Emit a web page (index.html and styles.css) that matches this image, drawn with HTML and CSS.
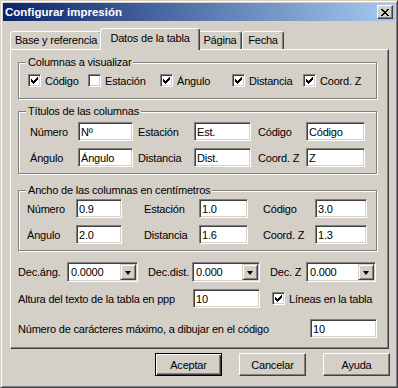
FILE: index.html
```html
<!DOCTYPE html>
<html lang="es">
  <head>
    <meta charset="UTF-8" />
    <title>Configurar impresión</title>
    <link rel="stylesheet" href="styles.css">
  </head>
  <body>
    <div class="window">
      <div class="titlebar">
        <span class="title">Configurar impresión</span>
        <span class="close-btn">
          <svg width="8" height="7" viewBox="0 0 8 7" shape-rendering="crispEdges">
            <g fill="#000">
              <rect x="0" y="0" width="2" height="1"/><rect x="6" y="0" width="2" height="1"/>
              <rect x="1" y="1" width="2" height="1"/><rect x="5" y="1" width="2" height="1"/>
              <rect x="2" y="2" width="4" height="1"/>
              <rect x="3" y="3" width="2" height="1"/>
              <rect x="2" y="4" width="4" height="1"/>
              <rect x="1" y="5" width="2" height="1"/><rect x="5" y="5" width="2" height="1"/>
              <rect x="0" y="6" width="2" height="1"/><rect x="6" y="6" width="2" height="1"/>
            </g>
          </svg>
        </span>
      </div>

      <div class="tabs">
        <div class="tab tab-base">Base y referencia</div>
        <div class="tab tab-datos active">Datos de la tabla</div>
        <div class="tab tab-pagina">Página</div>
        <div class="tab tab-fecha">Fecha</div>
      </div>

      <div class="panel">
        <!-- columnas a visualizar -->
        <div class="group g-cols">
          <span class="legend">Columnas a visualizar</span>
          <div class="checks">
            <label class="chk-item w60"><span class="cb"><svg class="tick" width="7" height="7" viewBox="0 0 7 7" shape-rendering="crispEdges"><path d="M6 0h1v1H6zM5 1h2v1H5zM0 2h1v1H0zM4 2h3v1H4zM0 3h2v1H0zM3 3h3v1H3zM0 4h5v1H0zM1 5h3v1H1zM2 6h1v1H2z"/></svg></span>Código</label>
            <label class="chk-item w72"><span class="cb"></span>Estación</label>
            <label class="chk-item w72"><span class="cb"><svg class="tick" width="7" height="7" viewBox="0 0 7 7" shape-rendering="crispEdges"><path d="M6 0h1v1H6zM5 1h2v1H5zM0 2h1v1H0zM4 2h3v1H4zM0 3h2v1H0zM3 3h3v1H3zM0 4h5v1H0zM1 5h3v1H1zM2 6h1v1H2z"/></svg></span>Ángulo</label>
            <label class="chk-item w71"><span class="cb"><svg class="tick" width="7" height="7" viewBox="0 0 7 7" shape-rendering="crispEdges"><path d="M6 0h1v1H6zM5 1h2v1H5zM0 2h1v1H0zM4 2h3v1H4zM0 3h2v1H0zM3 3h3v1H3zM0 4h5v1H0zM1 5h3v1H1zM2 6h1v1H2z"/></svg></span>Distancia</label>
            <label class="chk-item"><span class="cb"><svg class="tick" width="7" height="7" viewBox="0 0 7 7" shape-rendering="crispEdges"><path d="M6 0h1v1H6zM5 1h2v1H5zM0 2h1v1H0zM4 2h3v1H4zM0 3h2v1H0zM3 3h3v1H3zM0 4h5v1H0zM1 5h3v1H1zM2 6h1v1H2z"/></svg></span>Coord. Z</label>
          </div>
        </div>

        <!-- titulos -->
        <div class="group g-titles">
          <span class="legend">Títulos de las columnas</span>
          <div class="grid">
            <span class="lbl">Número</span>
            <input class="field" type="text" value="Nº" />
            <span class="lbl l2">Estación</span>
            <input class="field" type="text" value="Est." />
            <span class="lbl l3">Código</span>
            <input class="field" type="text" value="Código" />

            <span class="lbl">Ángulo</span>
            <input class="field" type="text" value="Ángulo" />
            <span class="lbl l2">Distancia</span>
            <input class="field" type="text" value="Dist." />
            <span class="lbl l3">Coord. Z</span>
            <input class="field" type="text" value="Z" />
          </div>
        </div>

        <!-- anchos -->
        <div class="group g-widths">
          <span class="legend">Ancho de las columnas en centímetros</span>
          <div class="grid">
            <span class="lbl">Número</span>
            <input class="field" type="text" value="0.9" />
            <span class="lbl l2">Estación</span>
            <input class="field" type="text" value="1.0" />
            <span class="lbl l3">Código</span>
            <input class="field" type="text" value="3.0" />

            <span class="lbl">Ángulo</span>
            <input class="field" type="text" value="2.0" />
            <span class="lbl l2">Distancia</span>
            <input class="field" type="text" value="1.6" />
            <span class="lbl l3">Coord. Z</span>
            <input class="field" type="text" value="1.3" />
          </div>
        </div>

        <div class="row dec-row">
          <span class="lbl dec-l1">Dec.áng.</span>
          <div class="combo combo-ang"><span class="combo-val">0.0000</span><span class="combo-btn"><i class="arrow"></i></span></div>
          <span class="lbl dec-l2">Dec.dist.</span>
          <div class="combo combo-dist"><span class="combo-val">0.000</span><span class="combo-btn"><i class="arrow"></i></span></div>
          <span class="lbl dec-l3">Dec. Z</span>
          <div class="combo combo-z"><span class="combo-val">0.000</span><span class="combo-btn"><i class="arrow"></i></span></div>
        </div>

        <div class="row altura-row">
          <span class="lbl altura-lbl">Altura del texto de la tabla en ppp</span>
          <input class="field small-field" type="text" value="10" />
          <label class="chk-item lineas"><span class="cb"><svg class="tick" width="7" height="7" viewBox="0 0 7 7" shape-rendering="crispEdges"><path d="M6 0h1v1H6zM5 1h2v1H5zM0 2h1v1H0zM4 2h3v1H4zM0 3h2v1H0zM3 3h3v1H3zM0 4h5v1H0zM1 5h3v1H1zM2 6h1v1H2z"/></svg></span>Líneas en la tabla</label>
        </div>

        <div class="row num-row">
          <span class="lbl num-lbl">Número de carácteres máximo, a dibujar en el código</span>
          <input class="field small-field" type="text" value="10" />
        </div>
      </div>

      <div class="buttons">
        <button class="btn btn-default">Aceptar</button>
        <button class="btn">Cancelar</button>
        <button class="btn">Ayuda</button>
      </div>
    </div>
  </body>
</html>
```

FILE: styles.css
```css
/* ventana estilo Windows clásico */
body {
  margin: 0;
  font-family: "Liberation Sans", Arial, sans-serif;
  font-size: 11px;
  letter-spacing: -0.2px;
  color: #000000;
  background-color: #d4d0c8;
}

.window {
  width: 398px;
  height: 388px;
  box-sizing: border-box;
  background-color: #d4d0c8;
  border: 1px solid;
  border-color: #d4d0c8 #404040 #404040 #d4d0c8;
  box-shadow: inset 1px 1px #ffffff, inset -1px -1px #808080;
  padding: 2px;
  display: flex;
  flex-direction: column;
}

.titlebar {
  height: 18px;
  flex-shrink: 0;
  background: linear-gradient(to right, #0a246a, #a6caf0);
  display: flex;
  align-items: center;
  justify-content: space-between;
  padding: 0 2px;
}

.title {
  color: #ffffff;
  font-weight: bold;
  font-size: 11.5px;
  letter-spacing: 0;
}

.close-btn {
  width: 16px;
  height: 14px;
  box-sizing: border-box;
  background-color: #d4d0c8;
  border: 1px solid;
  border-color: #ffffff #404040 #404040 #ffffff;
  box-shadow: inset -1px -1px #808080;
  display: flex;
  align-items: center;
  justify-content: center;
}

.close-btn svg {
  display: block;
  margin-left: -1px;
}

/* pestañas */
.tabs {
  display: flex;
  align-items: flex-end;
  height: 21px;
  margin: 7px 0 0 7px;
  position: relative;
  z-index: 1;
  flex-shrink: 0;
}

.tab {
  height: 18px;
  box-sizing: border-box;
  border: 1px solid;
  border-bottom: none;
  border-color: #ffffff #404040 transparent #ffffff;
  box-shadow: inset -1px 0 #808080;
  border-radius: 3px 3px 0 0;
  background-color: #d4d0c8;
  text-align: center;
  line-height: 16px;
}

.tab.active {
  height: 22px;
  margin: 0 -2px -1px -2px;
  line-height: 18px;
  position: relative;
}

.tab-base { width: 92px; }
.tab-datos { width: 100px; }
.tab-pagina { width: 44px; }
.tab-fecha { width: 42px; }

.panel {
  width: 379px;
  height: 300px;
  box-sizing: border-box;
  margin-left: 7px;
  border: 1px solid;
  border-color: #ffffff #404040 #404040 #ffffff;
  box-shadow: inset -1px -1px #808080;
  padding: 12px 11px 0 7px;
  flex-shrink: 0;
}

/* marcos de grupo */
.group {
  position: relative;
  border: 1px solid #808080;
  box-shadow: inset 1px 1px #ffffff, 1px 1px #ffffff;
}

.legend {
  position: absolute;
  top: -7px;
  left: 7px;
  padding: 0 2px;
  line-height: 13px;
  background-color: #d4d0c8;
  white-space: nowrap;
}

.g-cols {
  height: 37px;
  box-sizing: border-box;
  padding: 11px 0 0 9px;
}

.g-titles {
  height: 63px;
  box-sizing: border-box;
  margin-top: 12px;
  padding: 10px 0 0 11px;
}

.g-widths {
  height: 61px;
  box-sizing: border-box;
  margin-top: 16px;
  padding: 8px 0 0 8px;
}

.checks {
  display: flex;
  align-items: center;
  height: 13px;
}

.chk-item {
  display: flex;
  align-items: center;
  gap: 4px;
  white-space: nowrap;
}

.w60 { width: 60px; }
.w72 { width: 72px; }
.w71 { width: 71px; }

.cb {
  width: 13px;
  height: 13px;
  box-sizing: border-box;
  flex-shrink: 0;
  padding: 2px;
  background-color: #ffffff;
  border: 1px solid;
  border-color: #808080 #ffffff #ffffff #808080;
  box-shadow: inset 1px 1px #404040, inset -1px -1px #d4d0c8;
}

.tick {
  display: block;
  fill: #000000;
}

.grid {
  display: grid;
  row-gap: 7px;
  align-items: center;
}

.g-titles .grid {
  grid-template-columns: 48px 55px 61px 57px 55px 59px;
}

.g-titles .l2 { padding-left: 5px; }
.g-titles .l3 { padding-left: 7px; }

.g-widths .grid {
  grid-template-columns: 49px 46px 77px 49px 67px 52px;
}

.g-widths .l2 { padding-left: 22px; }
.g-widths .l3 { padding-left: 15px; }

.lbl {
  white-space: nowrap;
}

.field {
  width: 100%;
  height: 19px;
  box-sizing: border-box;
  margin: 0;
  padding: 0 2px;
  border: 1px solid;
  border-color: #808080 #ffffff #ffffff #808080;
  box-shadow: inset 1px 1px #404040, inset -1px -1px #d4d0c8;
  background-color: #ffffff;
  font-family: inherit;
  font-size: 11px;
  letter-spacing: -0.2px;
  color: #000000;
  outline: none;
}

/* filas inferiores */
.row {
  display: flex;
  align-items: center;
}

.dec-row { margin-top: 11px; height: 20px; }
.altura-row { margin-top: 7px; height: 19px; }
.num-row { margin-top: 11px; height: 19px; }

.dec-l1 { width: 49px; }
.dec-l2 { width: 44px; margin-left: 10px; }
.dec-l3 { width: 36px; margin-left: 10px; }

.combo {
  display: flex;
  height: 20px;
  box-sizing: border-box;
  padding: 1px;
  border: 1px solid;
  border-color: #808080 #ffffff #ffffff #808080;
  box-shadow: inset 1px 1px #404040, inset -1px -1px #d4d0c8;
  background-color: #ffffff;
}

.combo-ang { width: 71px; }
.combo-dist { width: 68px; }
.combo-z { width: 70px; }

.combo-val {
  flex: 1;
  padding-left: 2px;
  line-height: 16px;
}

.combo-btn {
  width: 16px;
  height: 16px;
  box-sizing: border-box;
  background-color: #d4d0c8;
  border: 1px solid;
  border-color: #d4d0c8 #404040 #404040 #d4d0c8;
  box-shadow: inset 1px 1px #ffffff, inset -1px -1px #808080;
  display: flex;
  align-items: center;
  justify-content: center;
}

.arrow {
  width: 0;
  height: 0;
  border-left: 3.5px solid transparent;
  border-right: 3.5px solid transparent;
  border-top: 4px solid #000000;
  margin-top: 1px;
}

.altura-lbl { width: 175px; }
.small-field { width: 67px; }
.lineas { margin-left: 12px; }
.num-lbl { width: 292px; }

/* botones */
.buttons {
  display: flex;
  justify-content: flex-end;
  gap: 17px;
  margin-top: 4px;
  padding-right: 5px;
}

.btn {
  width: 67px;
  height: 23px;
  box-sizing: border-box;
  margin: 0;
  padding: 0;
  background-color: #d4d0c8;
  border: 1px solid;
  border-color: #ffffff #404040 #404040 #ffffff;
  box-shadow: inset -1px -1px #808080;
  font-family: inherit;
  font-size: 11px;
  letter-spacing: -0.2px;
  color: #000000;
}

.btn-default {
  border-color: #000000;
  box-shadow: inset 1px 1px #ffffff, inset -1px -1px #404040, inset -2px -2px #808080;
}
```
